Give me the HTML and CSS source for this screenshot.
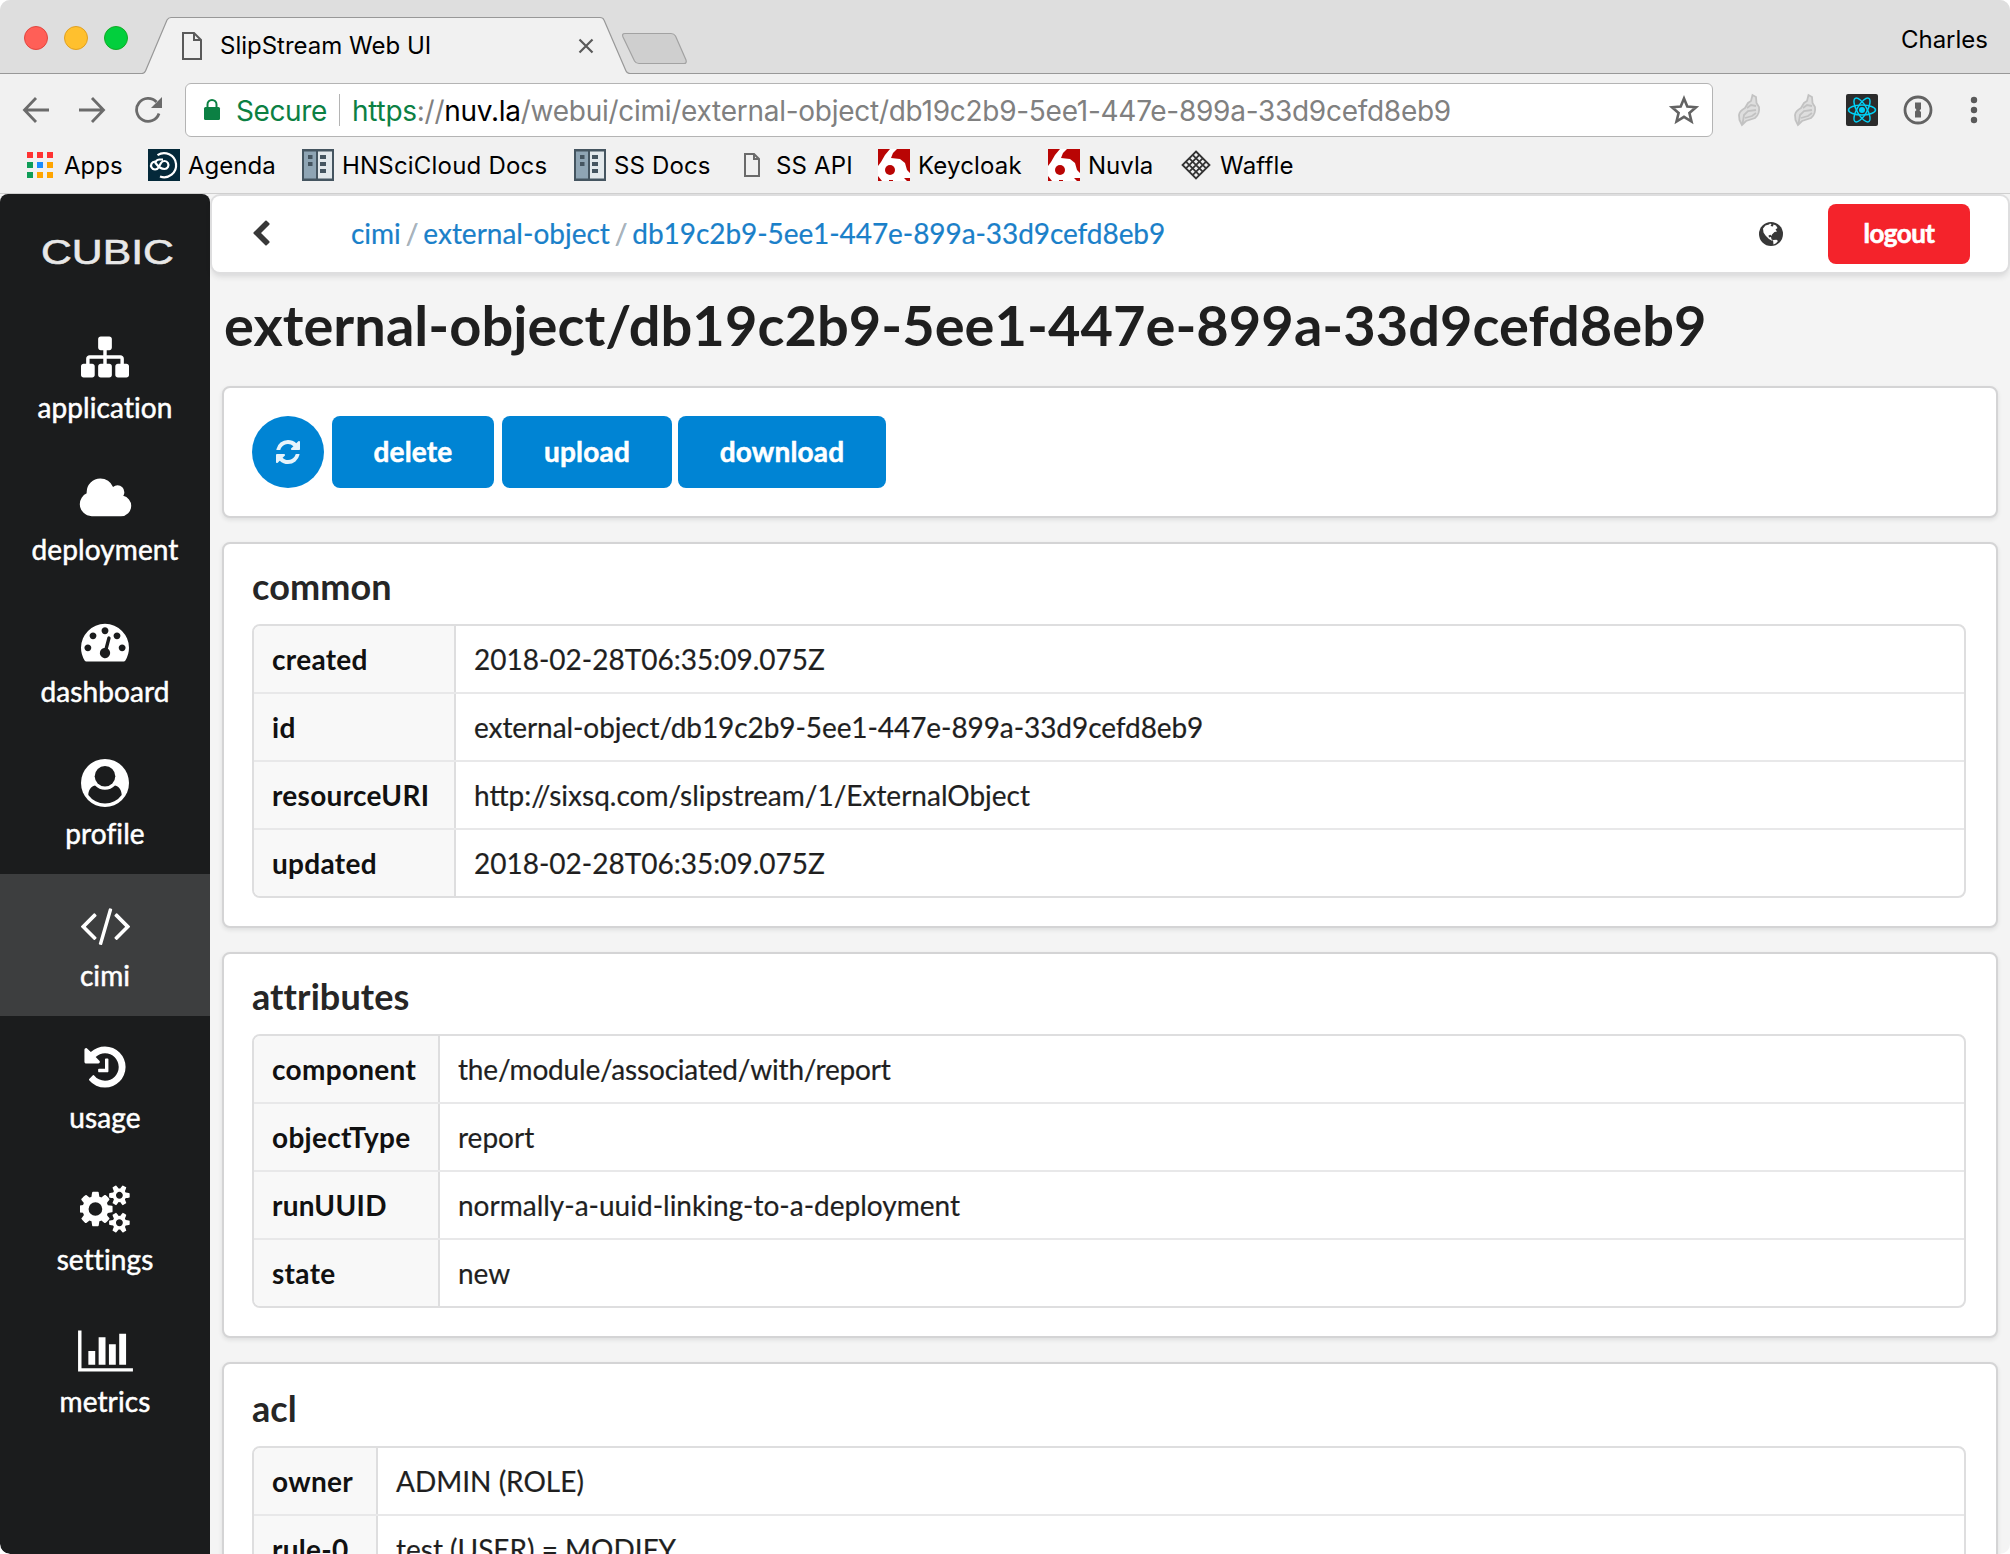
FILE: index.html
```html
<!DOCTYPE html>
<html lang="en">
<head>
<meta charset="utf-8">
<title>SlipStream Web UI</title>
<link rel="stylesheet" href="styles.css">
</head>
<body>
<div class="window">
  <header class="chrome">
    <div class="tabstrip">
      <svg class="tabstrip-art" width="2010" height="74" viewBox="0 0 2010 74">
        <circle cx="36" cy="38" r="11.5" fill="#ff5f57" stroke="#e2463f"/>
        <circle cx="76" cy="38" r="11.5" fill="#ffc02e" stroke="#e0a022"/>
        <circle cx="116" cy="38" r="11.5" fill="#02cf3d" stroke="#12ab25"/>
        <path d="M0 73.5H142Q144.500 73.500 145.500 71L167 20Q168.500 17.500 171 17.500H600Q603 17.500 604 20L626 71Q627 73.500 630 73.500H2010V76H0Z" fill="#f1f1f1" stroke="#989898" stroke-width="1.200"/>
        <path d="M625 33.500H671Q674 33.500 675.500 36L686 60Q687 63.500 684 63.500H639Q636 63.500 634.500 61L623 37Q621.500 33.500 625 33.500Z" fill="#cfcfcf" stroke="#a2a2a2" stroke-width="1.200"/>
      </svg>
      <div class="tab">
        <svg width="22" height="30" viewBox="0 0 22 30" fill="none" stroke="#5a5a5a" stroke-width="2"><path d="M2 2H13L20 9V28H2ZM13 2V9H20"/></svg>
        <span class="tab-title">SlipStream Web UI</span>
        <svg class="tab-close" width="16" height="16" viewBox="0 0 16 16" stroke="#5a5a5a" stroke-width="2.200"><path d="M1.500 1.500L14.500 14.500M14.500 1.500L1.500 14.500"/></svg>
      </div>
      <span class="user">Charles</span>
    </div>
    <div class="toolbar">
      <svg class="nav" width="28" height="28" viewBox="0 0 28 28" fill="none" stroke="#6b6b6b" stroke-width="2.800"><path d="M27 14H3M14 2L2.500 14L14 26"/></svg>
      <svg class="nav" width="28" height="28" viewBox="0 0 28 28" fill="none" stroke="#6b6b6b" stroke-width="2.800"><path d="M1 14H25M14 2L25.500 14L14 26"/></svg>
      <svg class="nav" width="28" height="28" viewBox="0 0 28 28" fill="none" stroke="#6b6b6b" stroke-width="2.800"><path d="M25 17.500A11.500 11.500 0 1 1 22.500 6"/><path d="M28 1V12H17Z" fill="#6b6b6b" stroke="none"/></svg>
      <div class="omnibox">
        <svg width="18" height="24" viewBox="0 0 18 24"><rect x="1" y="9" width="16" height="13" rx="1.500" fill="#0b8043"/><path d="M4.500 10V6.500a4.500 4.500 0 0 1 9 0V10" fill="none" stroke="#0b8043" stroke-width="2"/></svg>
        <span class="secure">Secure</span>
        <span class="divider"></span>
        <span class="url"><span class="scheme">https</span>://<span class="host">nuv.la</span>/webui/cimi/external-object/db19c2b9-5ee1-447e-899a-33d9cefd8eb9</span>
        <svg class="star" width="32" height="32" viewBox="0 0 32 32" fill="none" stroke="#636363" stroke-width="2.600"><path d="M16 4.500L19.300 12.600L28 13.300L21.400 19L23.500 27.500L16 22.900L8.500 27.500L10.600 19L4 13.300L12.700 12.600Z"/></svg>
      </div>
      <svg class="ext feather" width="24" height="34" viewBox="0 0 24 34"><use href="#feather"/></svg>
      <svg class="ext feather" width="24" height="34" viewBox="0 0 24 34"><use href="#feather"/></svg>
      <svg class="ext react" width="32" height="32" viewBox="0 0 32 32"><rect width="32" height="32" rx="2" fill="#2b2b2b"/><g fill="none" stroke="#00d0f5" stroke-width="1.500"><ellipse cx="16" cy="16" rx="13.500" ry="5"/><ellipse cx="16" cy="16" rx="13.500" ry="5" transform="rotate(60 16 16)"/><ellipse cx="16" cy="16" rx="13.500" ry="5" transform="rotate(120 16 16)"/></g><circle cx="16" cy="16" r="3" fill="#00d0f5"/></svg>
      <svg class="ext onepass" width="30" height="30" viewBox="0 0 30 30"><circle cx="15" cy="15" r="13" fill="none" stroke="#636363" stroke-width="2.800"/><path d="M12 7.500H18V14L16.500 15.500L18 17V22.500H12V16.500L13.500 15L12 13Z" fill="#636363"/></svg>
      <svg class="ext dots" width="8" height="28" viewBox="0 0 8 28" fill="#5a5a5a"><circle cx="4" cy="4" r="3.200"/><circle cx="4" cy="14" r="3.200"/><circle cx="4" cy="24" r="3.200"/></svg>
    </div>
    <nav class="bookmarks">
      <a class="bm bm-apps"><svg width="26" height="26" viewBox="0 0 26 26"><path fill="#f33" d="M0 0h6v6H0zM10 0h6v6h-6zM20 0h6v6h-6z"/><path fill="#0f9d58" d="M0 10h6v6H0zM0 20h6v6H0z"/><path fill="#1a8cff" d="M10 10h6v6h-6z"/><path fill="#ffa500" d="M20 10h6v6h-6zM10 20h6v6h-6zM20 20h6v6h-6z"/></svg><span>Apps</span></a>
      <a class="bm bm-agenda"><svg width="32" height="32" viewBox="0 0 32 32"><rect width="32" height="32" fill="#04293a"/><g fill="none" stroke="#fff" stroke-width="2.200"><path d="M9.500 6.200A12 12 0 1 1 12 27.500"/><path d="M15 10.500H11.500Q7.500 11 7.500 14Q12 20 16.500 20A4 4 0 1 0 13 14L10.500 18.500A4 4 0 1 1 7 12.500"/></g></svg><span>Agenda</span></a>
      <a class="bm bm-hn"><svg width="32" height="32" viewBox="0 0 32 32"><use href="#docs"/></svg><span>HNSciCloud Docs</span></a>
      <a class="bm bm-ss"><svg width="32" height="32" viewBox="0 0 32 32"><use href="#docs"/></svg><span>SS Docs</span></a>
      <a class="bm bm-api"><svg width="18" height="26" viewBox="0 0 18 26" fill="none" stroke="#6b6b6b" stroke-width="2"><path d="M2 2H11L16 7V24H2ZM11 2V7H16"/></svg><span>SS API</span></a>
      <a class="bm bm-key"><svg width="32" height="32" viewBox="0 0 32 32"><use href="#six"/></svg><span>Keycloak</span></a>
      <a class="bm bm-nuvla"><svg width="32" height="32" viewBox="0 0 32 32"><use href="#six"/></svg><span>Nuvla</span></a>
      <a class="bm bm-waffle"><svg width="32" height="32" viewBox="0 0 32 32" fill="none" stroke="#333" stroke-width="1.800"><path d="M16 2.500L29.500 16L16 29.500L2.500 16ZM12.600 5.900L26.100 19.400M9.300 9.300L22.700 22.700M5.900 12.600L19.400 26.100M19.400 5.900L5.900 19.400M22.700 9.300L9.300 22.700M26.100 12.600L12.600 26.100"/></svg><span>Waffle</span></a>
    </nav>
  </header>

  <div class="app">
    <aside class="sidebar">
      <div class="brand"><span>CUBIC</span></div>
      <a class="item"><svg width="48" height="48" viewBox="0 0 1792 1792"><path d="M1792 1248v320q0 40-28 68t-68 28h-320q-40 0-68-28t-28-68v-320q0-40 28-68t68-28h96v-192h-512v192h96q40 0 68 28t28 68v320q0 40-28 68t-68 28h-320q-40 0-68-28t-28-68v-320q0-40 28-68t68-28h96v-192h-512v192h96q40 0 68 28t28 68v320q0 40-28 68t-68 28h-320q-40 0-68-28t-28-68v-320q0-40 28-68t68-28h96v-192q0-52 38-90t90-38h512v-192h-96q-40 0-68-28t-28-68v-320q0-40 28-68t68-28h320q40 0 68 28t28 68v320q0 40-28 68t-68 28h-96v192h512q52 0 90 38t38 90v192h96q40 0 68 28t28 68z"/></svg><span>application</span></a>
      <a class="item"><svg width="55" height="48" viewBox="0 0 2048 1792"><path d="M1984 1152q0 159-112.500 271.500t-271.500 112.500h-1088q-185 0-316.500-131.500t-131.500-316.500q0-132 71-241.500t187-163.500q-2-28-2-43 0-212 150-362t362-150q158 0 286.500 88t187.500 230q70-62 166-62 106 0 181 75t75 181q0 75-41 138 129 30 213 134.500t84 239.500z"/></svg><span>deployment</span></a>
      <a class="item"><svg width="48" height="48" viewBox="0 0 1792 1792"><path d="M384 1152q0-53-37.500-90.500t-90.500-37.500-90.500 37.500-37.500 90.500 37.500 90.500 90.500 37.500 90.500-37.500 37.500-90.500zm192-448q0-53-37.500-90.500t-90.500-37.500-90.500 37.500-37.500 90.500 37.500 90.500 90.500 37.500 90.500-37.500 37.500-90.500zm428 481l101-382q6-26-7.500-48.500t-38.500-29.500-48 6.500-30 39.500l-101 382q-60 5-107 43.500t-63 98.500q-20 77 20 146t117 89 146-20 89-117q16-60-6-117t-72-91zm660-33q0-53-37.500-90.500t-90.500-37.500-90.500 37.500-37.500 90.500 37.500 90.500 90.500 37.500 90.500-37.500 37.500-90.500zm-640-640q0-53-37.500-90.500t-90.500-37.500-90.500 37.500-37.500 90.500 37.500 90.500 90.500 37.500 90.500-37.500 37.500-90.500zm448 192q0-53-37.500-90.500t-90.500-37.500-90.500 37.500-37.500 90.500 37.500 90.500 90.500 37.500 90.500-37.500 37.500-90.500zm320 448q0 261-141 483-19 29-54 29h-1402q-35 0-54-29-141-221-141-483 0-182 71-348t191-286 286-191 348-71 348 71 286 191 191 286 71 348z"/></svg><span>dashboard</span></a>
      <a class="item"><svg width="48" height="48" viewBox="0 0 48 48"><circle cx="24" cy="24" r="24"/><path class="cut" d="M14 26.500C9.500 27.500 7.500 31.500 7.300 36A20.600 20.600 0 0 0 40.700 36C40.500 31.500 38.500 27.500 34 26.500A14 14 0 0 1 14 26.500Z"/><circle class="cut" cx="24" cy="17.300" r="10.300"/></svg><span>profile</span></a>
      <a class="item active"><svg width="55" height="48" viewBox="0 0 2048 1792"><path d="M681 1399l-50 50q-10 10-23 10t-23-10l-466-466q-10-10-10-23t10-23l466-466q10-10 23-10t23 10l50 50q10 10 10 23t-10 23l-393 393 393 393q10 10 10 23t-10 23zm591-1067l-373 1291q-4 13-15.500 19.500t-23.500 2.500l-62-17q-13-4-19.500-15.500t-2.500-24.500l373-1291q4-13 15.500-19.500t23.500-2.500l62 17q13 4 19.500 15.500t2.500 24.500zm657 651l-466 466q-10 10-23 10t-23-10l-50-50q-10-10-10-23t10-23l393-393-393-393q-10-10-10-23t10-23l50-50q10-10 23-10t23 10l466 466q10 10 10 23t-10 23z"/></svg><span>cimi</span></a>
      <a class="item"><svg width="48" height="48" viewBox="0 0 1792 1792"><path d="M1664 896q0 156-61 298t-164 245-245 164-298 61q-172 0-327-72.500t-264-204.500q-7-10-6.500-22.500t8.500-20.500l137-138q10-9 25-9 16 2 23 12 73 95 179 147t225 52q104 0 198.500-40.500t163.500-109.500 109.500-163.500 40.500-198.500-40.500-198.500-109.500-163.500-163.500-109.500-198.500-40.500q-98 0-188 35.500t-160 101.500l137 138q31 30 14 69-17 40-59 40h-448q-26 0-45-19t-19-45v-448q0-42 40-59 39-17 69 14l130 129q107-101 244.500-156.500t284.500-55.500q156 0 298 61t245 164 164 245 61 298zm-640-288v448q0 14-9 23t-23 9h-320q-14 0-23-9t-9-23v-64q0-14 9-23t23-9h224v-352q0-14 9-23t23-9h64q14 0 23 9t9 23z"/></svg><span>usage</span></a>
      <a class="item"><svg class="cogs" width="51.400" height="48" viewBox="0 0 1920 1792"><path d="M832 896q0-106-75-181t-181-75-181 75-75 181 75 181 181 75 181-75 75-181zm768 512q0-52-38-90t-90-38-90 38-38 90q0 53 37.500 90.500t90.500 37.500 90.500-37.500 37.500-90.500zm0-1024q0-52-38-90t-90-38-90 38-38 90q0 53 37.500 90.500t90.500 37.500 90.500-37.500 37.500-90.500zm-384 421v185q0 10-7 19.500t-16 10.500l-155 24q-11 35-32 76 34 48 90 115 7 11 7 20 0 12-7 19-23 30-82.500 89.500t-78.500 59.500q-11 0-21-7l-115-90q-37 19-77 31-11 108-23 155-7 24-30 24h-186q-11 0-20-7.500t-10-17.500l-23-153q-34-10-75-31l-118 89q-7 7-20 7-11 0-21-8-144-133-144-160 0-9 7-19 10-14 41-53t47-61q-23-44-35-82l-152-24q-10-1-17-9.500t-7-19.500v-185q0-10 7-19.500t16-10.500l155-24q11-35 32-76-34-48-90-115-7-11-7-20 0-12 7-20 22-30 82-89t79-59q11 0 21 7l115 90q34-18 77-32 11-108 23-154 7-24 30-24h186q11 0 20 7.500t10 17.500l23 153q34 10 75 31l118-89q8-7 20-7 11 0 21 8 144 133 144 160 0 8-7 19-12 16-42 54t-45 60q23 48 34 82l152 23q10 2 17 10.500t7 19.500zm640 533v140q0 16-149 31-12 27-30 52 51 113 51 138 0 4-4 7-122 71-124 71-8 0-46-47t-52-68q-20 2-30 2t-30-2q-14 21-52 68t-46 47q-2 0-124-71-4-3-4-7 0-25 51-138-18-25-30-52-149-15-149-31v-140q0-16 149-31 13-29 30-52-51-113-51-138 0-4 4-7 4-2 35-20t59-34 30-16q8 0 46 46.500t52 67.500q20-2 30-2t30 2q51-71 92-112l6-2q4 0 124 70 4 3 4 7 0 25-51 138 17 23 30 52 149 15 149 31zm0-1024v140q0 16-149 31-12 27-30 52 51 113 51 138 0 4-4 7-122 71-124 71-8 0-46-47t-52-68q-20 2-30 2t-30-2q-14 21-52 68t-46 47q-2 0-124-71-4-3-4-7 0-25 51-138-18-25-30-52-149-15-149-31v-140q0-16 149-31 13-29 30-52-51-113-51-138 0-4 4-7 4-2 35-20t59-34 30-16q8 0 46 46.500t52 67.500q20-2 30-2t30 2q51-71 92-112l6-2q4 0 124 70 4 3 4 7 0 25-51 138 17 23 30 52 149 15 149 31z"/></svg><span>settings</span></a>
      <a class="item"><svg width="55" height="48" viewBox="0 0 2048 1792"><path d="M640 896v512h-256v-512h256zm384-512v1024h-256v-1024h256zm1024 1152v128h-2048v-1536h128v1408h1920zm-640-896v768h-256v-768h256zm384-384v1152h-256v-1152h256z"/></svg><span>metrics</span></a>
    </aside>

    <main class="main">
      <div class="topbar">
        <svg class="back" width="28" height="28" viewBox="0 0 1792 1792" fill="#383838"><path d="M1427 301l-531 531 531 531q19 19 19 45t-19 45l-166 166q-19 19-45 19t-45-19l-742-742q-19-19-19-45t19-45l742-742q19-19 45-19t45 19l166 166q19 19 19 45t-19 45z"/></svg>
        <nav class="crumbs"><a>cimi</a><i>/</i><a>external-object</a><i>/</i><a class="uuid">db19c2b9-5ee1-447e-899a-33d9cefd8eb9</a></nav>
        <svg class="globe" width="24" height="24" viewBox="0 0 24 24"><circle cx="12" cy="12" r="12" fill="#383838"/><path fill="#fff" d="M4 6.500L6.500 3.500L10 2.500L11 1.500L12.500 2.200L11.500 4L14 4.600L14.500 2.500L17 3.500L18.500 6L16.500 7.500L18 9.500L15.500 10L13 12.500L12.500 14L11.500 12.800L9.500 13.500L10 15.500L12 15L12.500 17.500L14 18L13 18.800L10 17L6.500 13.500L4.500 10.500ZM14 18L17.500 17.800L19 19L17 21.300L14.500 22.500Z"/></svg>
        <a class="logout">logout</a>
      </div>
      <h1>external-object/db19c2b9-5ee1-447e-899a-33d9cefd8eb9</h1>
      <section class="card actions">
        <a class="btn round"><svg width="28" height="28" viewBox="0 0 1792 1792"><path d="M1639 1056q0 5-1 7-64 268-268 434.500t-478 166.500q-146 0-282.500-55t-243.500-157l-129 129q-19 19-45 19t-45-19-19-45v-448q0-26 19-45t45-19h448q26 0 45 19t19 45-19 45l-137 137q71 66 161 102t187 36q134 0 250-65t186-179q11-17 53-117 8-23 30-23h192q13 0 22.500 9.500t9.500 22.500zm25-800v448q0 26-19 45t-45 19h-448q-26 0-45-19t-19-45 19-45l138-138q-148-137-349-137-134 0-250 65t-186 179q-11 17-53 117-8 23-30 23h-199q-13 0-22.500-9.500t-9.500-22.500v-7q65-268 270-434.500t480-166.500q146 0 284 55.500t245 156.500l130-129q19-19 45-19t45 19 19 45z"/></svg></a>
        <a class="btn delete">delete</a>
        <a class="btn upload">upload</a>
        <a class="btn download">download</a>
      </section>
      <section class="card">
        <h3>common</h3>
        <div class="table t-common">
          <div class="row"><b>created</b><span>2018-02-28T06:35:09.075Z</span></div>
          <div class="row"><b>id</b><span class="id">external-object/db19c2b9-5ee1-447e-899a-33d9cefd8eb9</span></div>
          <div class="row"><b>resourceURI</b><span>http://sixsq.com/slipstream/1/ExternalObject</span></div>
          <div class="row"><b>updated</b><span>2018-02-28T06:35:09.075Z</span></div>
        </div>
      </section>
      <section class="card">
        <h3>attributes</h3>
        <div class="table t-attributes">
          <div class="row"><b>component</b><span class="path">the/module/associated/with/report</span></div>
          <div class="row"><b>objectType</b><span>report</span></div>
          <div class="row"><b>runUUID</b><span>normally-a-uuid-linking-to-a-deployment</span></div>
          <div class="row"><b>state</b><span>new</span></div>
        </div>
      </section>
      <section class="card last">
        <h3>acl</h3>
        <div class="table t-acl">
          <div class="row"><b>owner</b><span>ADMIN (ROLE)</span></div>
          <div class="row"><b>rule-0</b><span>test (USER) = MODIFY</span></div>
        </div>
      </section>
    </main>
  </div>
</div>

<svg class="defs" width="0" height="0">
  <symbol id="docs" viewBox="0 0 32 32"><rect width="32" height="32" fill="#455560"/><rect x="2" y="2.500" width="12" height="27" fill="#8fa5b4"/><rect x="16" y="2.500" width="14" height="27" fill="#e3e9ec"/><path fill="#455560" d="M6 6h4.500v4H6zM6 13h4.500v4H6zM18 6h6v4h-6zM18 13h6v4h-6zM18 20h6v4h-6z"/></symbol>
  <symbol id="six" viewBox="0 0 32 32"><rect width="32" height="32" fill="#fff"/><path fill="#b90504" d="M0 0H12L7 6L3 13L0 17ZM19 0H32V24L29 21L27 14L22 10L13 9L15 4Z"/><circle cx="12" cy="21" r="5" fill="#b90504"/><path fill="#b90504" d="M0 27L4 32H0ZM11 31h4v1h-4zM26 29h6v3h-3z"/></symbol>
  <symbol id="feather" viewBox="0 0 24 34"><path d="M5 32L2.500 27L2 22Q2.500 18 8 15L11 10L14 8L15.500 2L19 4L19.500 10L22 14Q23 21 18 25L9 28Z" fill="#dedede" stroke="#c2c2c2" stroke-width="1.800"/><path d="M5.500 31L7 22L11 18L19 17M8 25L15 23L19 20M10 15L14 12L19 13" fill="none" stroke="#c2c2c2" stroke-width="1.800"/></symbol>
</svg>
</body>
</html>
```
FILE: styles.css
```css
* { box-sizing: border-box; }
body { margin: 0; background: #fff; font-family: Lato, "Liberation Sans", sans-serif; font-size: 28px; color: #1f1f1f; }
svg { display: block; flex: none; }
.defs { position: absolute; }
.window { width: 2010px; height: 1554px; overflow: hidden; border-radius: 10px; background: #f4f4f4; display: flex; flex-direction: column; }

/* browser chrome */
.chrome { flex: none; height: 194px; background: #f1f1f1; border-bottom: 1px solid #cfcfcf; font-family: Inter, "Liberation Sans", sans-serif; font-size: 24px; color: #000; }
.tabstrip { height: 74px; background: #dedede; position: relative; display: flex; align-items: flex-start; justify-content: space-between; padding: 0 22px 0 181px; }
.tabstrip-art { position: absolute; left: 0; top: 0; }
.tab { position: relative; width: 413px; height: 57px; margin-top: 17px; display: flex; align-items: center; }
.tab-title { margin-left: 17px; line-height: 30px; }
.tab-close { margin-left: auto; }
.user { position: relative; margin-top: 25px; line-height: 30px; }
.toolbar { height: 72px; display: flex; align-items: center; padding-left: 22px; }
.nav { margin-right: 28px; }
.omnibox { width: 1528px; height: 54px; margin-left: -5px; background: #fff; border: 1px solid #b4b4b4; border-radius: 6px; display: flex; align-items: center; padding: 0 12px 0 17px; font-size: 28px; }
.secure, .url { padding-top: 2px; }
.secure { color: #0b8043; margin-left: 15px; width: 103px; letter-spacing: -.4px; }
.divider { width: 1px; height: 32px; background: #b4b4b4; margin-right: 12px; }
.url { color: #808080; white-space: nowrap; letter-spacing: -.27px; }
.scheme { color: #0b8043; }
.host { color: #000; }
.star { margin-left: auto; }
.ext { margin-left: 24px; }
.feather + .feather { margin-left: 32px; }
.react { margin-left: 29px; }
.onepass { margin-left: 25px; }
.dots { margin-left: 37px; }
.bookmarks { height: 48px; margin-top: -5px; display: flex; align-items: center; padding-left: 27px; }
.bm { display: flex; align-items: center; white-space: nowrap; }
.bm span { line-height: 30px; padding-top: 2px; }
.bm-apps { gap: 11px; width: 121px; }
.bm-agenda { gap: 8px; width: 154px; }
.bm-hn { gap: 8px; width: 272px; letter-spacing: .2px; }
.bm-ss { gap: 8px; width: 169px; letter-spacing: .15px; }
.bm-api { gap: 15px; width: 135px; letter-spacing: .15px; }
.bm-key { gap: 8px; width: 170px; letter-spacing: .15px; }
.bm-nuvla { gap: 8px; width: 132px; }
.bm-waffle { gap: 8px; letter-spacing: .2px; }

/* application */
.app { flex: 1; min-height: 0; display: flex; }
.sidebar { width: 210px; flex: none; background: #1b1c1d; border-radius: 8px 8px 0 10px; }
.brand { height: 112px; display: flex; align-items: center; justify-content: center; padding: 4px 0 0 5px; }
.brand span { font-family: "Liberation Sans", sans-serif; font-size: 35px; color: #e8e8e8; -webkit-text-stroke: .6px #e8e8e8; transform: scaleX(1.220); }
.item { height: 142px; display: flex; flex-direction: column; align-items: center; padding-top: 27px; color: #fff; }
.item svg { fill: #fff; }
.item .cogs { margin-left: 1px; }
.item .cut { fill: #1b1c1d; }
.item span { margin-top: 9px; line-height: 34px; letter-spacing: .1px; font-variant-ligatures: common-ligatures; -webkit-text-stroke: .5px #fff; }
.item.active { background: #3d3e3f; }

.main { flex: 1; min-width: 0; }
.topbar { height: 76px; margin: 2px 2px 0; background: #fff; border-radius: 8px; box-shadow: 0 0 0 2px #dededf, 0 4px 6px rgba(34,36,38,.15); display: flex; align-items: center; padding: 0 38px 0 35px; }
.crumbs { margin-left: 76px; padding-bottom: 2px; display: flex; align-items: center; color: #1a80c9; -webkit-text-stroke: .2px #1a80c9; }
.crumbs i { font-style: normal; color: #b4b4b4; width: 22.5px; text-align: center; }
.crumbs .uuid { letter-spacing: -.07px; }
.globe { margin-left: auto; }
.logout { margin-left: 45px; width: 142px; height: 60px; padding-bottom: 2px; background: #f4232b; border-radius: 8px; color: #fff; font-weight: 700; font-size: 26px; letter-spacing: -.5px; -webkit-text-stroke: .6px #fff; display: flex; align-items: center; justify-content: center; }
h1 { margin: 0 0 0 14px; height: 114px; line-height: 106px; font-size: 56px; font-weight: 700; white-space: nowrap; letter-spacing: .03px; }
.card { margin: 0 12px 24px; background: #fff; border: 2px solid #d4d4d5; border-radius: 8px; box-shadow: 0 2px 4px rgba(34,36,38,.1); padding: 28px 30px 28px 28px; height: 386px; }
.actions { height: 132px; display: flex; }
.btn { height: 72px; padding-bottom: 2px; background: #0084d4; border-radius: 8px; color: #fff; font-weight: 700; letter-spacing: .2px; -webkit-text-stroke: .5px #fff; display: flex; align-items: center; justify-content: center; }
.round { width: 72px; padding: 0; border-radius: 50%; margin-right: 8px; }
.round svg { fill: #e6f3fb; }
.delete { width: 162px; margin-right: 8px; }
.upload { width: 170px; margin-right: 6px; }
.download { width: 208px; }
h3 { margin: -6px 0 18px; height: 40px; line-height: 40px; font-size: 36px; font-weight: 700; color: #262626; font-variant-ligatures: none; letter-spacing: .1px; }
.last h3 { margin-top: -4px; }
.table { border: 2px solid #dededf; border-radius: 8px; overflow: hidden; }
.row { height: 68px; display: flex; line-height: 66px; border-top: 2px solid #e8e8e9; }
.row:first-child { height: 66px; border-top: 0; }
.row b { background: #f8f8f8; border-right: 2px solid #dededf; padding-left: 18px; color: #111; flex: none; letter-spacing: .3px; }
.row span { padding-left: 18px; -webkit-text-stroke: .2px #1f1f1f; }
.row .id { letter-spacing: -.075px; }
.row .path { letter-spacing: -.19px; }
.t-common b { width: 202px; }
.t-attributes b { width: 186px; }
.t-acl b { width: 124px; }
```
